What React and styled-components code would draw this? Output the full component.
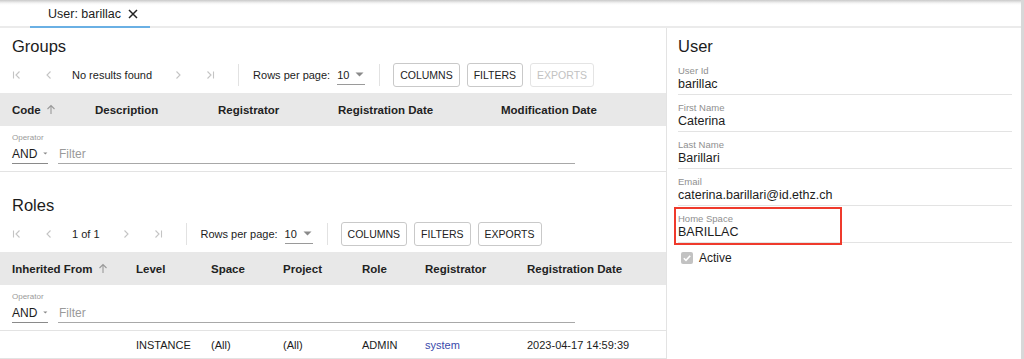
import styled, { createGlobalStyle } from "styled-components";

const GlobalStyle = createGlobalStyle`
  html, body {
    margin: 0;
    padding: 0;
    background: #fff;
    overflow: hidden;
  }
  body {
    font-family: "Liberation Sans", Arial, Helvetica, sans-serif;
    color: #1c1c1c;
  }
`;

const groupCols = "83px 123px 120px 163px 1fr";
const roleCols = "124px 75px 72px 79px 63px 102px 1fr";

const groupHeaders = ["Code", "Description", "Registrator", "Registration Date", "Modification Date"];
const roleHeaders = ["Inherited From", "Level", "Space", "Project", "Role", "Registrator", "Registration Date"];

const FirstIcon = () => (
  <svg width="10" height="10" viewBox="0 0 10 10" fill="none" stroke="#c4c4c4" strokeWidth="1.1">
    <path d="M1.5 1.5v7M7.5 1.5L4 5l3.5 3.5" />
  </svg>
);
const PrevIcon = () => (
  <svg width="10" height="10" viewBox="0 0 10 10" fill="none" stroke="#c4c4c4" strokeWidth="1.1">
    <path d="M6.5 1.5L3 5l3.5 3.5" />
  </svg>
);
const NextIcon = () => (
  <svg width="10" height="10" viewBox="0 0 10 10" fill="none" stroke="#c4c4c4" strokeWidth="1.1">
    <path d="M3.5 1.5L7 5 3.5 8.5" />
  </svg>
);
const LastIcon = () => (
  <svg width="10" height="10" viewBox="0 0 10 10" fill="none" stroke="#c4c4c4" strokeWidth="1.1">
    <path d="M2.5 1.5L6 5 2.5 8.5M8.5 1.5v7" />
  </svg>
);
const Caret = () => (
  <svg width="9" height="5" viewBox="0 0 9 5">
    <path d="M0.5 0.5h8L4.5 4.5z" fill="#8a8a8a" />
  </svg>
);
const SortArrow = () => (
  <svg width="10" height="11" viewBox="0 0 10 11" fill="none" stroke="#9a9a9a" strokeWidth="1.1">
    <path d="M5 10V1.5M1.5 5L5 1.5 8.5 5" />
  </svg>
);
const CloseIcon = () => (
  <svg width="10" height="10" viewBox="0 0 10 10" fill="none" stroke="#222" strokeWidth="1.5">
    <path d="M1 1l8 8M9 1L1 9" />
  </svg>
);
const Check = () => (
  <svg width="10" height="10" viewBox="0 0 10 10" fill="none" stroke="#fff" strokeWidth="1.6">
    <path d="M1.8 5.2l2.2 2.2 4.2-4.6" />
  </svg>
);

const Page = styled.div`
  width: 1024px;
  height: 359px;
  display: flex;
  flex-direction: column;
  border-right: 3px solid #d8d8d8;
  box-sizing: border-box;
  overflow: hidden;
`;

const TabBar = styled.div`
  height: 26px;
  flex: none;
  display: flex;
  align-items: stretch;
  background: linear-gradient(#c9c9c9, #f4f4f4 3px, #fff 5px);
  border-bottom: 2px solid #ebebeb;
`;

const Tab = styled.div`
  margin-left: 30px;
  width: 120px;
  box-sizing: border-box;
  padding-left: 18px;
  padding-top: 1px;
  display: flex;
  align-items: center;
  gap: 7px;
  font-size: 12.5px;
  margin-bottom: -2px;
  border-bottom: 2px solid #6ab0e4;
`;

const Main = styled.div`
  flex: 1;
  display: flex;
  min-height: 0;
`;

const LeftPanel = styled.div`
  width: 666px;
  flex: none;
  border-right: 1px solid #e3e3e3;
`;

const RightPanel = styled.div`
  flex: 1;
  padding: 0 9px 0 11px;
`;

const Title = styled.div`
  font-size: 16.5px;
  line-height: 20px;
  margin-top: ${(p) => p.$top}px;
  margin-bottom: ${(p) => p.$bottom ?? 0}px;
  padding-left: ${(p) => (p.$inset ? 12 : 0)}px;
`;

const Toolbar = styled.div`
  height: 30px;
  margin-top: 4px;
  padding-left: 5px;
  display: flex;
  align-items: center;
  font-size: 11px;
`;

const PagerIcon = styled.div`
  width: 24px;
  height: 24px;
  display: flex;
  align-items: center;
  justify-content: center;
  margin-right: ${(p) => p.$mr ?? 8}px;
`;

const PagerText = styled.span`
  margin-left: 3px;
  margin-right: 14px;
`;

const Divider = styled.div`
  width: 1px;
  height: 22px;
  background: #e2e2e2;
  margin: 0 ${(p) => p.$right}px 0 ${(p) => p.$left}px;
`;

const Select = styled.div`
  margin-left: ${(p) => p.$ml ?? 7}px;
  height: 20px;
  width: ${(p) => p.$w}px;
  box-sizing: border-box;
  display: flex;
  align-items: center;
  gap: 6px;
  border-bottom: 1px solid ${(p) => p.$line};
  font-size: ${(p) => p.$size}px;
`;

const Buttons = styled.div`
  display: flex;
  gap: 7px;
`;

const Button = styled.div`
  height: 22px;
  padding: 0 6px;
  display: flex;
  align-items: center;
  border: 1px solid ${(p) => (p.$disabled ? "#e4e4e4" : "#c9c9c9")};
  border-radius: 3px;
  font-size: 10.5px;
  color: ${(p) => (p.$disabled ? "#c2c2c2" : "#222")};
`;

const Grid = styled.div`
  display: grid;
  grid-template-columns: ${(p) => p.$cols};
  align-items: center;
`;

const HeaderRow = styled(Grid)`
  margin-top: 3px;
  height: 33px;
  background: #e8e8e8;
  font-size: 11.5px;
  font-weight: bold;
  color: #222;
`;

const Cell = styled.div`
  padding-left: 12px;
  display: flex;
  align-items: center;
  gap: 5px;
  white-space: nowrap;
  color: ${(p) => (p.$link ? "#3949ab" : "inherit")};
`;

const FilterRow = styled.div`
  height: 46px;
  box-sizing: border-box;
  padding: 8px 12px 7px;
  display: flex;
  align-items: flex-end;
  border-bottom: 1px solid #e3e3e3;
`;

const OperatorBox = styled.div`
  display: flex;
  flex-direction: column;
`;

const TinyLabel = styled.div`
  font-size: 8px;
  line-height: 10px;
  color: #9a9a9a;
  margin-bottom: 1px;
`;

const FilterInput = styled.div`
  margin-left: 10px;
  width: 517px;
  height: 20px;
  box-sizing: border-box;
  border-bottom: 1px solid #a8a8a8;
  display: flex;
  align-items: center;
  padding-left: 1px;
  font-size: 12px;
  color: #9a9a9a;
`;

const DataRow = styled(Grid)`
  height: 27px;
  font-size: 11px;
  border-bottom: 1px solid #e3e3e3;
`;

const Field = styled.div`
  position: relative;
  padding: 8px 0 2px;
  border-bottom: 1px solid #e3e3e3;
`;

const FieldLabel = styled.div`
  font-size: 9.5px;
  line-height: 10px;
  color: #8f8f8f;
  margin-bottom: 1px;
`;

const FieldValue = styled.div`
  font-size: 12.5px;
  line-height: 15px;
`;

const Highlight = styled.div`
  position: absolute;
  left: -4px;
  top: 1px;
  width: 168px;
  height: 38px;
  box-sizing: border-box;
  border: 2px solid #ef3a2c;
  pointer-events: none;
`;

const CheckRow = styled.div`
  margin-top: 8px;
  padding-left: 3px;
  display: flex;
  align-items: center;
  gap: 6px;
  font-size: 12px;
`;

const CheckBox = styled.div`
  width: 12px;
  height: 12px;
  border-radius: 2px;
  background: #c2c2c2;
  display: flex;
  align-items: center;
  justify-content: center;
`;

const Pager = ({ text }) => (
  <>
    <PagerIcon><FirstIcon /></PagerIcon>
    <PagerIcon><PrevIcon /></PagerIcon>
    <PagerText>{text}</PagerText>
    <PagerIcon><NextIcon /></PagerIcon>
    <PagerIcon $mr={0}><LastIcon /></PagerIcon>
  </>
);

const TableToolbar = ({ text, exportsDisabled }) => (
  <Toolbar>
    <Pager text={text} />
    <Divider $left={16} $right={14} />
    <span>Rows per page:</span>
    <Select $w={28} $line="#9a9a9a" $size={11}>
      10 <Caret />
    </Select>
    <Divider $left={14} $right={13} />
    <Buttons>
      <Button>COLUMNS</Button>
      <Button>FILTERS</Button>
      <Button $disabled={exportsDisabled}>EXPORTS</Button>
    </Buttons>
  </Toolbar>
);

const Filters = () => (
  <FilterRow>
    <OperatorBox>
      <TinyLabel>Operator</TinyLabel>
      <Select $w={36} $ml={0} $line="#8a8a8a" $size={12}>
        AND <Caret />
      </Select>
    </OperatorBox>
    <FilterInput>Filter</FilterInput>
  </FilterRow>
);

const Headers = ({ cols, names }) => (
  <HeaderRow $cols={cols}>
    {names.map((n, i) => (
      <Cell key={n}>
        {n}
        {i === 0 && <SortArrow />}
      </Cell>
    ))}
  </HeaderRow>
);

const userFields = [
  ["User Id", "barillac"],
  ["First Name", "Caterina"],
  ["Last Name", "Barillari"],
  ["Email", "caterina.barillari@id.ethz.ch"],
  ["Home Space", "BARILLAC", true],
];

export default function App() {
  return (
    <>
      <GlobalStyle />
      <Page>
        <TabBar>
          <Tab>
            User: barillac <CloseIcon />
          </Tab>
        </TabBar>
        <Main>
          <LeftPanel>
            <Title $top={8} $inset>Groups</Title>
            <TableToolbar text="No results found" exportsDisabled />
            <Headers cols={groupCols} names={groupHeaders} />
            <Filters />

            <Title $top={23} $inset>Roles</Title>
            <TableToolbar text="1 of 1" />
            <Headers cols={roleCols} names={roleHeaders} />
            <Filters />
            <DataRow $cols={roleCols}>
              <Cell />
              <Cell>INSTANCE</Cell>
              <Cell>(All)</Cell>
              <Cell>(All)</Cell>
              <Cell>ADMIN</Cell>
              <Cell $link>system</Cell>
              <Cell>2023-04-17 14:59:39</Cell>
            </DataRow>
          </LeftPanel>
          <RightPanel>
            <Title $top={8} $bottom={2}>User</Title>
            {userFields.map(([label, value, marked]) => (
              <Field key={label}>
                <FieldLabel>{label}</FieldLabel>
                <FieldValue>{value}</FieldValue>
                {marked && <Highlight />}
              </Field>
            ))}
            <CheckRow>
              <CheckBox><Check /></CheckBox>
              Active
            </CheckRow>
          </RightPanel>
        </Main>
      </Page>
    </>
  );
}
